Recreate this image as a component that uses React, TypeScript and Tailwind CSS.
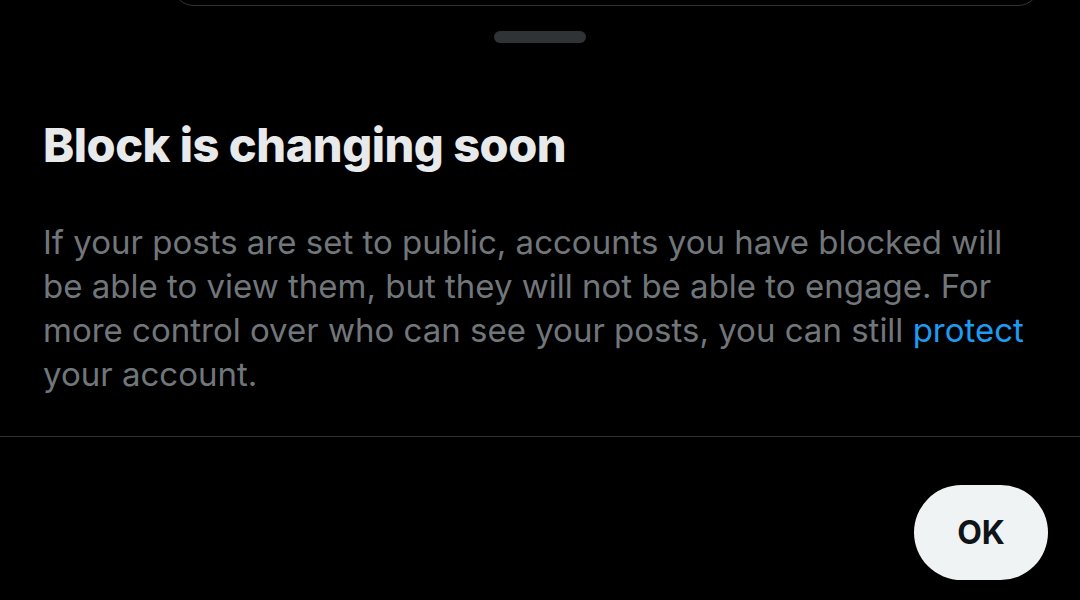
export default function App() {
  return (
    <div className="h-[600px] w-[1080px] overflow-hidden bg-black font-['Inter',sans-serif]">
      {/* sheet behind the dialog, only its bottom edge shows */}
      <div className="ml-[172px] mr-[40px] -mt-[40px] h-[46px] rounded-b-[22px] border border-[#2f3336]" />
      <div className="mt-[25px] flex justify-center">
        <div className="h-[12px] w-[92px] rounded-full bg-[#2f3336]" />
      </div>
      <div className="px-[43px]">
        <h1 className="mt-[74px] text-[47px] font-extrabold leading-[56px] tracking-[-0.5px] text-[#e7e9ea]">
          Block is changing soon
        </h1>
        <p className="mt-[47px] text-[33px] leading-[44px] text-[#71767b]">
          If your posts are set to public, accounts you have blocked will
          <br />
          be able to view them, but they will not be able to engage. For
          <br />
          more control over who can see your posts, you can still{' '}
          <span className="text-[#1d9bf0]">protect</span>
          <br />
          your account.
        </p>
      </div>
      <div className="mt-[40px] border-t border-[#2f3336]" />
      <div className="flex justify-end px-[32px] pt-[48px]">
        <button className="flex h-[95px] w-[134px] items-center justify-center rounded-full bg-[#eff3f4] text-[32px] font-bold text-[#0f1419]">
          OK
        </button>
      </div>
    </div>
  );
}
